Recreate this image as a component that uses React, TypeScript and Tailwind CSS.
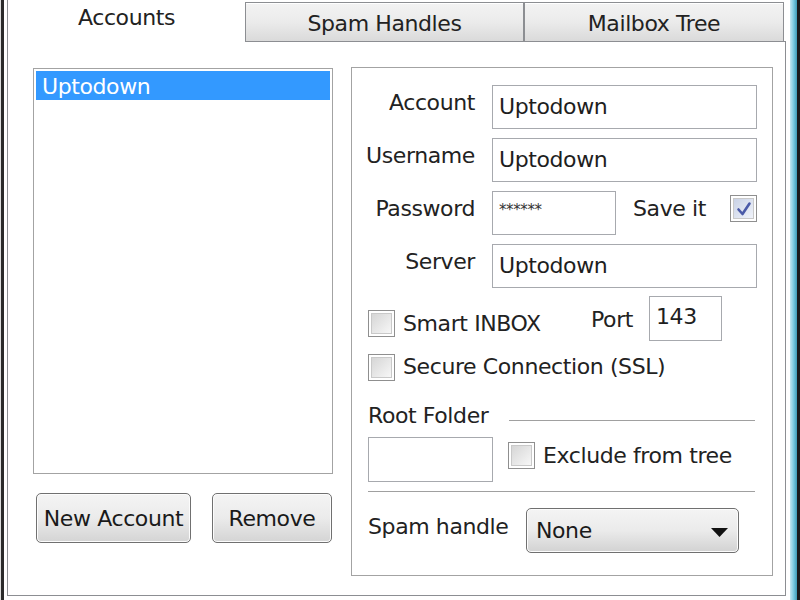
import React from "react";

const font = { fontFamily: '"DejaVu Sans", "Liberation Sans", sans-serif' };

function TextBox({ w, h = 44, children, pt = 8, small = false }: { w: number; h?: number; children?: React.ReactNode; pt?: number; small?: boolean }) {
  return (
    <div
      className={`border border-[#a7a9ae] bg-white pl-[6px] text-[#1e1e1e] ${small ? "text-[15px] leading-[20px] text-[#333]" : "text-[22px] leading-[26px]"}`}
      style={{ width: w, height: h, paddingTop: pt }}
    >
      {children}
    </div>
  );
}

function CheckBox({ checked = false }: { checked?: boolean }) {
  return (
    <div className="w-[27px] h-[27px] shrink-0 border border-[#8f8f8f] bg-white p-[2px]">
      <div
        className={`w-full h-full border border-[#c9c9c9] flex items-center justify-center ${
          checked ? "bg-gradient-to-br from-[#c9d2e6] to-[#f0f3fa]" : "bg-gradient-to-br from-[#d6d6d6] to-[#f7f7f7]"
        }`}
      >
        {checked && (
          <svg width="16" height="16" viewBox="0 0 16 16">
            <path d="M2.5 8.5 L6.5 13 L13.5 2.5" fill="none" stroke="#4a5aa8" strokeWidth="2.6" strokeLinecap="round" strokeLinejoin="round" />
          </svg>
        )}
      </div>
    </div>
  );
}

function Button({ w, children }: { w: number; children: React.ReactNode }) {
  return (
    <div
      className="h-[50px] rounded-[5px] border border-[#707070] flex items-center justify-center text-[22px] text-[#1a1a1a] bg-gradient-to-b from-[#f4f4f4] via-[#ebebeb] to-[#d4d4d4] shadow-[inset_0_0_0_1px_#fcfcfc]"
      style={{ width: w }}
    >
      {children}
    </div>
  );
}

function Label({ children }: { children: React.ReactNode }) {
  return <div className="w-[123px] text-right pt-[5px] text-[22px] leading-[26px] text-[#222]">{children}</div>;
}

export default function App() {
  return (
    <div className="w-[800px] h-[600px] bg-white flex overflow-hidden text-[#222] tracking-[-0.4px]" style={font}>
      <div className="w-[1px] bg-[#dcdcdc]" />
      <div className="w-[3px] bg-[#2b2b2b]" />
      <div className="w-[3px] bg-white" />
      <div className="w-[779px] flex flex-col">
        {/* Tabs */}
        <div className="h-[42px] flex items-end">
          <div className="w-[238px] h-[42px] border-l border-[#8c8e92] bg-white flex justify-center pt-[5px] text-[22px] leading-[26px]">
            Accounts
          </div>
          <div className="w-[279px] h-[40px] border border-[#8c8e92] bg-gradient-to-b from-[#f3f3f3] via-[#ebebeb] to-[#dadada] shadow-[inset_0_1px_0_#ffffff] flex justify-center pt-[8px] text-[22px] leading-[26px]">
            Spam Handles
          </div>
          <div className="w-[260px] h-[40px] border border-[#8c8e92] bg-gradient-to-b from-[#f3f3f3] via-[#ebebeb] to-[#dadada] shadow-[inset_0_1px_0_#ffffff] flex justify-center pt-[8px] text-[22px] leading-[26px]">
            Mailbox Tree
          </div>
          <div className="flex-1 h-[42px] border-b border-[#8c8e92]" />
        </div>
        {/* Tab page */}
        <div className="h-[554px] border-l border-r border-b border-[#8c8e92] bg-white flex pt-[25px] pl-[25px]">
          {/* Left column */}
          <div className="w-[300px] flex flex-col">
            <div className="mt-[1px] h-[406px] border border-[#a3a3a3] p-[2px]">
              <div className="h-[29px] bg-[#3399ff] text-white text-[22px] leading-[26px] pl-[6px] pt-[3px]">Uptodown</div>
            </div>
            <div className="mt-[19px] flex ml-[3px] gap-[21px]">
              <Button w={155}>New Account</Button>
              <Button w={120}>Remove</Button>
            </div>
          </div>
          {/* Group box */}
          <div className="ml-[18px] w-[422px] h-[509px] border border-[#a3a3a3] shadow-[inset_1px_1px_0_#ffffff] flex flex-col pt-[17px]">
            <div className="flex flex-col gap-[9px]">
              <div className="flex h-[44px]">
                <Label>Account</Label>
                <div className="ml-[17px]">
                  <TextBox w={265}>Uptodown</TextBox>
                </div>
              </div>
              <div className="flex h-[44px]">
                <Label>Username</Label>
                <div className="ml-[17px]">
                  <TextBox w={265}>Uptodown</TextBox>
                </div>
              </div>
              <div className="flex h-[44px]">
                <Label>Password</Label>
                <div className="ml-[17px]">
                  <TextBox w={124} small pt={8}>
                    ******
                  </TextBox>
                </div>
                <div className="ml-[17px] pt-[5px] text-[22px] leading-[26px]">Save it</div>
                <div className="ml-auto mr-[15px] mt-[4px]">
                  <CheckBox checked />
                </div>
              </div>
              <div className="flex h-[44px]">
                <Label>Server</Label>
                <div className="ml-[17px]">
                  <TextBox w={265}>Uptodown</TextBox>
                </div>
              </div>
            </div>
            {/* Smart INBOX row */}
            <div className="mt-[8px] flex items-start h-[45px] pl-[16px]">
              <div className="mt-[14px]">
                <CheckBox />
              </div>
              <div className="ml-[8px] mt-[15px] w-[188px] text-[22px] leading-[26px]">Smart INBOX</div>
              <div className="mt-[11px] w-[58px] text-[22px] leading-[26px]">Port</div>
              <TextBox w={73} h={45} pt={7}>
                143
              </TextBox>
            </div>
            {/* Secure connection */}
            <div className="flex items-start h-[40px] pl-[16px]">
              <div className="mt-[13px]">
                <CheckBox />
              </div>
              <div className="ml-[8px] mt-[13px] text-[22px] leading-[26px]">Secure Connection (SSL)</div>
            </div>
            {/* Root folder */}
            <div className="flex items-start pl-[16px] pt-[22px]">
              <div className="w-[141px] text-[22px] leading-[26px]">Root Folder</div>
              <div className="flex-1 mr-[17px] mt-[17px] h-[2px] border-t border-[#a0a0a0] border-b border-b-white" />
            </div>
            <div className="flex items-start pl-[16px] mt-[8px]">
              <TextBox w={125} h={45} />
              <div className="ml-[15px] mt-[5px]">
                <CheckBox />
              </div>
              <div className="ml-[8px] mt-[6px] text-[22px] leading-[26px]">Exclude from tree</div>
            </div>
            <div className="mt-[9px] ml-[16px] mr-[17px] h-[2px] border-t border-[#a0a0a0] border-b border-b-white" />
            {/* Spam handle */}
            <div className="mt-[15px] flex items-start pl-[16px]">
              <div className="w-[158px] mt-[6px] text-[22px] leading-[26px]">Spam handle</div>
              <div className="w-[213px] h-[45px] rounded-[5px] border border-[#707070] bg-gradient-to-b from-[#f4f4f4] via-[#ebebeb] to-[#d2d2d2] shadow-[inset_0_0_0_1px_#fcfcfc] flex items-start pl-[9px] pt-[9px] pr-[10px]">
                <div className="flex-1 text-[22px] leading-[26px] text-[#1a1a1a]">None</div>
                <svg className="mt-[10px]" width="17" height="9" viewBox="0 0 17 9">
                  <path d="M0 0 H17 L8.5 9 Z" fill="#111" />
                </svg>
              </div>
            </div>
          </div>
        </div>
      </div>
      <div className="w-[4px] bg-white" />
      <div className="w-[7px] bg-gradient-to-r from-[#c4e8f1] via-[#7ccbe0] to-[#3c9db8]" />
      <div className="w-[3px] bg-[#1b1b1b]" />
    </div>
  );
}
